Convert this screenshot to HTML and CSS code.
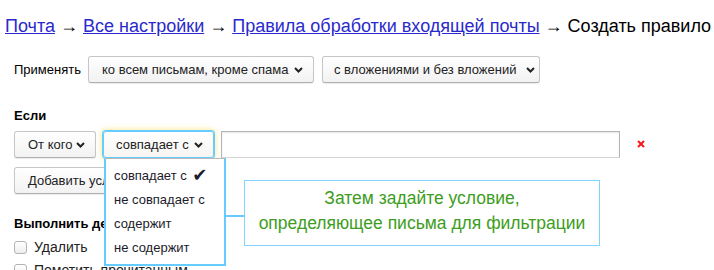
FILE: index.html
```html
<!DOCTYPE html>
<html lang="ru">
<head>
    <meta charset="UTF-8">
    <title>Создать правило</title>
    <link rel="stylesheet" href="styles.css">
</head>
<body>
    <div class="crumbs">
        <a href="#">Почта</a> → <a href="#">Все настройки</a> → <a href="#">Правила обработки входящей почты</a> → Создать правило
    </div>

    <div class="row apply-row">
        <span class="label">Применять</span>
        <button class="btn btn-wide"><span>ко всем письмам, кроме спама</span><svg class="chev" width="9" height="6" viewBox="0 0 9 6"><path d="M1 1l3.5 3.5L8 1"/></svg></button>
        <button class="btn btn-att"><span>с вложениями и без вложений</span><svg class="chev" width="9" height="6" viewBox="0 0 9 6"><path d="M1 1l3.5 3.5L8 1"/></svg></button>
    </div>

    <div class="section-title if-title">Если</div>

    <div class="row cond-row">
        <button class="btn btn-from"><span>От кого</span><svg class="chev" width="9" height="6" viewBox="0 0 9 6"><path d="M1 1l3.5 3.5L8 1"/></svg></button>
        <div class="select-wrap">
            <button class="btn btn-match open"><span>совпадает с</span><svg class="chev" width="9" height="6" viewBox="0 0 9 6"><path d="M1 1l3.5 3.5L8 1"/></svg></button>
            <ul class="menu">
                <li>совпадает с <span class="tick">✔</span></li>
                <li>не совпадает с</li>
                <li>содержит</li>
                <li>не содержит</li>
            </ul>
            <div class="connector"></div>
            <div class="callout">Затем задайте условие,<br>определяющее письма для фильтрации</div>
        </div>
        <input class="field" type="text">
        <svg class="remove" width="8" height="8" viewBox="0 0 8 8"><path d="M1 1l6 6M7 1L1 7"/></svg>
    </div>

    <div class="row add-row">
        <button class="btn btn-add"><span>Добавить условие</span></button>
    </div>

    <div class="section-title do-title">Выполнить действие</div>
    <label class="check"><span class="box"></span>Удалить</label>
    <label class="check"><span class="box"></span>Пометить прочитанным</label>
</body>
</html>
```

FILE: styles.css
```css
body {
    margin: 0;
    font-family: Arial, "Liberation Sans", sans-serif;
    font-size: 13px;
    color: #000;
    background: #fff;
    overflow: hidden;
}
.crumbs {
    margin: 16px 0 0 5px;
    font-size: 18px;
    line-height: 21px;
    white-space: nowrap;
}
.crumbs a {
    color: #2a2acc;
    text-decoration: underline;
}
.row {
    display: flex;
    align-items: center;
    padding-left: 14px;
}
.apply-row {
    margin-top: 19px;
    gap: 8px;
}
.apply-row .label {
    margin-right: -1px;
}
.btn {
    height: 27px;
    box-sizing: border-box;
    display: inline-flex;
    align-items: center;
    justify-content: space-between;
    padding: 0 10px 0 12px;
    font-family: inherit;
    font-size: 13px;
    color: #222;
    background: linear-gradient(#fff, #f2f2f2);
    border: 1px solid #c6c6c6;
    border-bottom-color: #b0b0b0;
    border-radius: 3px;
    box-shadow: 0 1px 1px rgba(0,0,0,0.08);
    white-space: nowrap;
}
.btn-wide { width: 226px; padding-left: 13px; }
.btn-att { width: 218px; padding: 0 4px 0 11px; }
.chev {
    flex-shrink: 0;
    margin-left: 4px;
    fill: none;
    stroke: #222;
    stroke-width: 2;
}
.section-title {
    font-weight: bold;
    font-size: 13px;
    line-height: 16px;
    padding-left: 14px;
}
.if-title { margin-top: 25px; }
.cond-row {
    margin-top: 7px;
    gap: 7px;
}
.btn-from { width: 82px; padding-left: 13px; }
.select-wrap {
    position: relative;
}
.btn-match {
    width: 111px;
    padding-left: 12px;
}
.btn-match.open {
    border-color: #66ccff;
    box-shadow: 0 0 0 1px #66ccff, 0 0 5px 2px rgba(255, 226, 120, 0.7);
    background: linear-gradient(#fff, #f6f5f3);
}
.menu {
    position: absolute;
    left: 1px;
    top: 27px;
    width: 122px;
    height: 108px;
    box-sizing: border-box;
    margin: 0;
    padding: 5px 0 0 8px;
    list-style: none;
    background: #fff;
    border: 2px solid #66ccff;
    border-top-color: #b9b9b9;
    border-top-width: 1px;
    z-index: 2;
}
.menu li {
    line-height: 24px;
    color: #1b1b2b;
    white-space: nowrap;
}
.tick {
    font-family: "DejaVu Sans", sans-serif;
    font-size: 18px;
    line-height: 16px;
    margin-left: 2px;
    vertical-align: -1px;
}
.connector {
    position: absolute;
    left: 121px;
    top: 84px;
    width: 21px;
    height: 2px;
    background: #66ccff;
}
.callout {
    position: absolute;
    left: 141px;
    top: 49px;
    width: 356px;
    height: 66px;
    box-sizing: border-box;
    padding-top: 5px;
    border: 1px solid #80d4ff;
    background: #fff;
    color: #3d9d22;
    font-size: 17.5px;
    line-height: 25px;
    text-align: center;
    white-space: nowrap;
    z-index: 2;
}
.field {
    width: 399px;
    height: 27px;
    box-sizing: border-box;
    margin: 0;
    border: 1px solid #b5b5b5;
    border-bottom-color: #d6d6d6;
    box-shadow: inset 0 1px 2px rgba(0,0,0,0.1);
}
.remove {
    margin-left: 10px;
    margin-top: -2px;
    fill: none;
    stroke: #f21a1a;
    stroke-width: 2;
}
.add-row { margin-top: 9px; }
.btn-add { width: 130px; padding-left: 13px; }
.do-title { margin-top: 22px; }
.check {
    display: flex;
    align-items: center;
    gap: 7px;
    padding-left: 14px;
    line-height: 18px;
    margin-top: 6px;
    font-size: 14px;
    color: #222;
}
.check + .check { margin-top: 5px; }
.box {
    width: 13px;
    height: 13px;
    box-sizing: border-box;
    border: 1px solid #b3b3b3;
    border-radius: 3px;
    background: linear-gradient(#fff, #eee);
}
```
